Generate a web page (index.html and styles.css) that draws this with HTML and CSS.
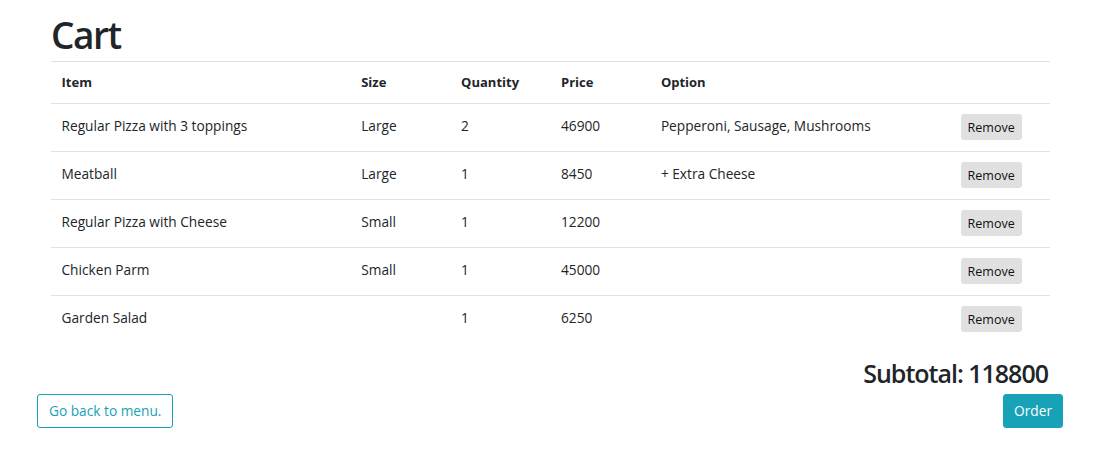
FILE: index.html
```html
<!DOCTYPE html>
<html lang="en">
<head>
<meta charset="utf-8">
<title>Cart</title>
<link rel="stylesheet" href="styles.css">
</head>
<body>
<div class="page">
  <div class="content">
    <h1 class="title">Cart</h1>
    <table class="cart">
      <colgroup>
        <col class="c-item"><col class="c-size"><col class="c-qty"><col class="c-price"><col class="c-opt"><col class="c-act">
      </colgroup>
      <thead>
        <tr><th>Item</th><th>Size</th><th>Quantity</th><th>Price</th><th>Option</th><th></th></tr>
      </thead>
      <tbody>
        <tr><td>Regular Pizza with 3 toppings</td><td>Large</td><td>2</td><td>46900</td><td>Pepperoni, Sausage, Mushrooms</td><td><button class="remove">Remove</button></td></tr>
        <tr><td>Meatball</td><td>Large</td><td>1</td><td>8450</td><td>+ Extra Cheese</td><td><button class="remove">Remove</button></td></tr>
        <tr><td>Regular Pizza with Cheese</td><td>Small</td><td>1</td><td>12200</td><td></td><td><button class="remove">Remove</button></td></tr>
        <tr><td>Chicken Parm</td><td>Small</td><td>1</td><td>45000</td><td></td><td><button class="remove">Remove</button></td></tr>
        <tr><td>Garden Salad</td><td></td><td>1</td><td>6250</td><td></td><td><button class="remove">Remove</button></td></tr>
      </tbody>
    </table>
    <h2 class="subtotal">Subtotal: 118800</h2>
  </div>
  <div class="actions">
    <button class="btn btn-outline">Go back to menu.</button>
    <button class="btn btn-solid">Order</button>
  </div>
</div>
</body>
</html>
```
FILE: styles.css
```css
html, body { margin: 0; padding: 0; background: #fff; }
body {
  font-family: "Open Sans", "Noto Sans", sans-serif;
  font-size: 13.7px;
  line-height: 1.5;
  color: #212529;
}
.page { padding: 0 31px 0 37px; }
.content { padding: 0 13px 0 14px; }
.title {
  margin: 0;
  padding-top: 12px;
  height: 61px;
  box-sizing: border-box;
  font-size: 37px;
  line-height: 45px;
  font-weight: 600;
  letter-spacing: -1.5px;
}
.cart {
  width: 100%;
  border-collapse: collapse;
  table-layout: fixed;
}
.c-item { width: 30%; }
.c-size { width: 10%; }
.c-qty { width: 10%; }
.c-price { width: 10%; }
.c-opt { width: 30%; }
.c-act { width: 10%; }
.cart th, .cart td {
  text-align: left;
  padding: 10.5px 10.5px;
  border-top: 1px solid #dee2e6;
  vertical-align: top;
  white-space: nowrap;
}
.cart th { font-size: 13px; font-weight: 700; height: 20px; border-bottom: 1px solid #dee2e6; }
.cart td { height: 26px; line-height: 22px; }
.cart tbody tr:first-child td { border-top: 0; }
.remove {
  font-family: inherit;
  font-size: 12.5px;
  line-height: 18px;
  padding: 5px 7px 3px;
  margin: 0;
  border: 0;
  border-radius: 3px;
  background: #e0e0e0;
  color: #111;
}
.cart td:last-child { padding-top: 10px; padding-bottom: 11px; }
.subtotal {
  margin: 14px 0 0;
  text-align: right;
  font-size: 25px;
  line-height: 32px;
  font-weight: 600;
  letter-spacing: -1px;
  padding-right: 2px;
}
.actions {
  display: flex;
  justify-content: space-between;
  margin-top: 5px;
}
.btn {
  font-family: inherit;
  font-size: 13.7px;
  line-height: 20px;
  padding: 6px 10px;
  border-radius: 3px;
  border: 1px solid #17a2b8;
  margin: 0;
}
.btn-outline { background: #fff; color: #17a2b8; padding: 6px 11px; }
.btn-solid { background: #17a2b8; color: #fff; }
```
